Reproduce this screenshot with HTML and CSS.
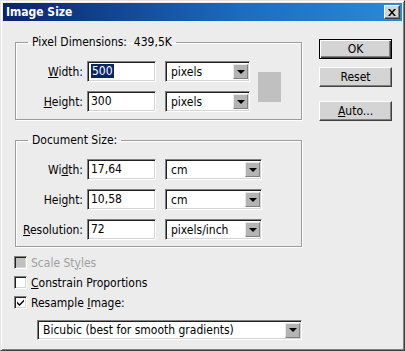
FILE: index.html
```html
<!DOCTYPE html>
<html lang="en">

<head>
    <meta charset="UTF-8">
    <title>Image Size</title>
    <link rel="stylesheet" href="styles.css">
</head>

<body>
    <div class="dialog">
        <div class="titlebar">
            <span class="title">Image Size</span>
            <span class="close">
                <svg width="8" height="7" viewBox="0 0 8 7">
                    <path d="M0 0h2l2 2.5L6 0h2L5 3.5 8 7H6L4 4.5 2 7H0l3-3.5z" fill="#000"/>
                </svg>
            </span>
        </div>
        <div class="content">
            <div class="main">
                <fieldset class="group pixel-group">
                    <legend>Pixel Dimensions:&nbsp; 439,5K</legend>
                    <div class="pixel-wrap">
                        <div class="rows">
                            <div class="row">
                                <label class="field-label"><u>W</u>idth:</label>
                                <div class="input"><span class="selected">500</span></div>
                                <div class="select"><span>pixels</span><i class="arrow"></i></div>
                            </div>
                            <div class="row">
                                <label class="field-label"><u>H</u>eight:</label>
                                <div class="input">300</div>
                                <div class="select"><span>pixels</span><i class="arrow"></i></div>
                            </div>
                        </div>
                        <div class="link-box"></div>
                    </div>
                </fieldset>

                <fieldset class="group doc-group">
                    <legend>Document Size:</legend>
                    <div class="rows">
                        <div class="row">
                            <label class="field-label">Wi<u>d</u>th:</label>
                            <div class="input">17,64</div>
                            <div class="select long"><span>cm</span><i class="arrow"></i></div>
                        </div>
                        <div class="row">
                            <label class="field-label">Hei<u>g</u>ht:</label>
                            <div class="input">10,58</div>
                            <div class="select long"><span>cm</span><i class="arrow"></i></div>
                        </div>
                        <div class="row">
                            <label class="field-label"><u>R</u>esolution:</label>
                            <div class="input">72</div>
                            <div class="select long"><span>pixels/inch</span><i class="arrow"></i></div>
                        </div>
                    </div>
                </fieldset>

                <div class="checks">
                    <div class="check disabled"><i class="box"></i><span>Scale St<u>y</u>les</span></div>
                    <div class="check"><i class="box"></i><span><u>C</u>onstrain Proportions</span></div>
                    <div class="check">
                        <i class="box">
                            <svg width="9" height="9" viewBox="0 0 9 9">
                                <path d="M1 3.5l2.5 2.5L8 1.5v2L3.5 8 1 5.5z" fill="#000"/>
                            </svg>
                        </i>
                        <span>Resample <u>I</u>mage:</span>
                    </div>
                </div>

                <div class="select method"><span>Bicubic (best for smooth gradients)</span><i class="arrow"></i></div>
            </div>

            <div class="actions">
                <div class="btn default">OK</div>
                <div class="btn">Reset</div>
                <div class="btn auto"><u>A</u>uto...</div>
            </div>
        </div>
    </div>
</body>

</html>
```

FILE: styles.css
```css
body {
    margin: 0;
    padding: 0;
    background-color: #ececec;
    font-family: "DejaVu Sans Condensed", "Liberation Sans", sans-serif;
    font-size: 12px;
    color: #000;
}

.dialog {
    width: 405px;
    height: 351px;
    box-sizing: border-box;
    background-color: #ececec;
    border: 1px solid;
    border-color: #e4e4e4 #404040 #404040 #e4e4e4;
    box-shadow: inset 1px 1px 0 #fff, inset -1px -1px 0 #808080;
    padding: 2px;
    display: flex;
    flex-direction: column;
}

.titlebar {
    height: 18px;
    flex: none;
    display: flex;
    align-items: center;
    justify-content: space-between;
    padding: 0 2px 0 3px;
    background: linear-gradient(to right, #0a246a, #1c6cc0 60%, #2a8ad8);
    color: #fff;
}

.title {
    font-weight: bold;
    font-size: 12px;
}

.close {
    width: 16px;
    height: 14px;
    box-sizing: border-box;
    display: flex;
    align-items: center;
    justify-content: center;
    background-color: #d4d4d4;
    border: 1px solid;
    border-color: #fff #404040 #404040 #fff;
    box-shadow: inset -1px -1px 0 #808080;
}

.content {
    display: flex;
    padding: 14px 0 0 12px;
}

.main {
    width: 287px;
}

/* group boxes */

.group {
    margin: 0;
    padding: 12px 0 7px 0;
    border: 1px solid #9c9c9c;
    box-shadow: 1px 1px 0 #fff, inset 1px 1px 0 #fff;
}

.group legend {
    margin-left: 12px;
    padding: 0 4px;
    line-height: 14px;
}

.doc-group {
    margin-top: 13px;
    padding-bottom: 6px;
}

.pixel-wrap {
    display: flex;
    align-items: center;
}

.rows {
    display: flex;
    flex-direction: column;
    gap: 9px;
}

.row {
    display: flex;
    align-items: center;
}

.field-label {
    width: 67px;
    margin-right: 4px;
    text-align: right;
}

.input {
    width: 69px;
    height: 21px;
    box-sizing: border-box;
    padding: 2px 0 0 3px;
    margin-right: 9px;
    background-color: #fff;
    border: 1px solid;
    border-color: #808080 #fff #fff #808080;
    box-shadow: inset 1px 1px 0 #202020, inset -1px -1px 0 #d4d4d4;
    line-height: 15px;
}

.selected {
    background-color: #0a246a;
    color: #fff;
    padding: 0 1px;
}

.select {
    width: 85px;
    height: 21px;
    box-sizing: border-box;
    display: flex;
    align-items: center;
    justify-content: space-between;
    padding: 0 1px 0 5px;
    background-color: #fff;
    border: 1px solid;
    border-color: #808080 #fff #fff #808080;
    box-shadow: inset 1px 1px 0 #202020, inset -1px -1px 0 #d4d4d4;
}

.select.long {
    width: 97px;
}

.arrow {
    width: 15px;
    height: 15px;
    box-sizing: border-box;
    display: flex;
    align-items: center;
    justify-content: center;
    background-color: #b4b4b4;
    border: 1px solid;
    border-color: #e8e8e8 #808080 #808080 #e8e8e8;
}

.arrow::after {
    content: '';
    border-left: 4px solid transparent;
    border-right: 4px solid transparent;
    border-top: 4px solid #000;
}

.link-box {
    width: 23px;
    height: 30px;
    margin-left: 8px;
    background-color: #c0c0c0;
}

/* checkboxes */

.checks {
    margin: 9px 0 0 -1px;
    display: flex;
    flex-direction: column;
    gap: 7px;
}

.check {
    display: flex;
    align-items: center;
    height: 13px;
}

.check .box {
    width: 13px;
    height: 13px;
    box-sizing: border-box;
    margin-right: 4px;
    display: flex;
    align-items: center;
    justify-content: center;
    background-color: #fff;
    border: 1px solid;
    border-color: #808080 #fff #fff #808080;
    box-shadow: inset 1px 1px 0 #202020, inset -1px -1px 0 #d4d4d4;
}

.check.disabled .box {
    background-color: #c0c0c0;
}

.check.disabled span {
    color: #a0a0a0;
}

.select.method {
    width: 265px;
    height: 20px;
    margin: 11px 0 0 22px;
}

/* buttons */

.actions {
    margin: 4px 0 0 17px;
    display: flex;
    flex-direction: column;
}

.btn {
    width: 73px;
    height: 20px;
    box-sizing: border-box;
    display: flex;
    align-items: center;
    justify-content: center;
    background-color: #d4d4d4;
    border: 1px solid;
    border-color: #fff #404040 #404040 #fff;
    box-shadow: inset -1px -1px 0 #808080;
}

.btn.default {
    border: 1px solid #000;
    box-shadow: inset 1px 1px 0 #fff, inset -1px -1px 0 #404040, inset -2px -2px 0 #808080;
}

.btn + .btn {
    margin-top: 8px;
}

.btn.auto {
    margin-top: 14px;
}
```
